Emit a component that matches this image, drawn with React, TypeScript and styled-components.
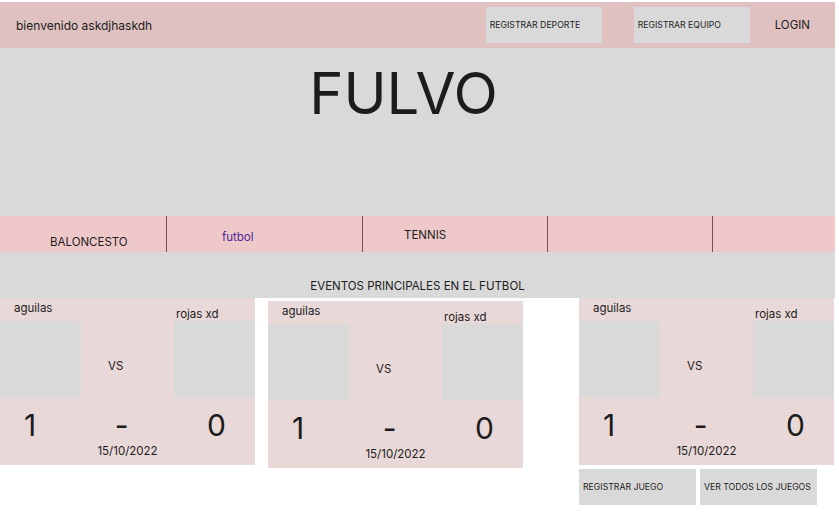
import styled, { createGlobalStyle } from "styled-components";

const GlobalStyle = createGlobalStyle`
  body {
    margin: 0;
    background: #ffffff;
    font-family: Inter, "Noto Sans", Arial, sans-serif;
    color: #1c1c1c;
  }
`;

const Page = styled.div`
  width: 835px;
  padding-top: 2px;
`;

const Header = styled.header`
  display: flex;
  align-items: center;
  height: 46px;
  padding-right: 25px;
  background-color: #dfc1c1;
`;

const Greeting = styled.span`
  flex: 1;
  padding-left: 16px;
  font-size: 12px;
`;

const GreyButton = styled.button<{ $gap?: number; $width?: number }>`
  display: flex;
  align-items: center;
  width: ${(p) => p.$width ?? 117}px;
  height: 36px;
  margin-left: ${(p) => p.$gap ?? 0}px;
  padding: 0 0 0 4px;
  border: none;
  background-color: #d9d9d9;
  color: #1c1c1c;
  font-family: Inter, "Noto Sans", Arial, sans-serif;
  font-size: 8.7px;
  text-align: left;
  cursor: pointer;
`;

const LoginLink = styled.span`
  margin-left: 25px;
  font-size: 11.5px;
`;

const Hero = styled.section`
  height: 168px;
  padding-right: 28px;
  background-color: #d9d9d9;
  text-align: center;
`;

const Title = styled.h1`
  margin: 0;
  padding-top: 12px;
  font-size: 58px;
  font-weight: 400;
  line-height: 66px;
`;

const SportNav = styled.nav`
  display: grid;
  grid-template-columns: 167px 196px 185px 165px 1fr;
  height: 36px;
  background-color: #efc9c9;
`;

const SportTab = styled.div<{ $left: number; $top: number; $active?: boolean; $last?: boolean }>`
  padding-left: ${(p) => p.$left}px;
  padding-top: ${(p) => p.$top}px;
  border-right: ${(p) => (p.$last ? "none" : "1px solid #735353")};
  font-size: 11.5px;
  line-height: 14px;
  color: ${(p) => (p.$active ? "#4b2696" : "#1c1c1c")};
`;

const EventsBand = styled.div`
  height: 46px;
  padding-top: 27px;
  box-sizing: border-box;
  background-color: #d9d9d9;
  font-size: 11.5px;
  line-height: 14px;
  text-align: center;
`;

const CardsRow = styled.div`
  display: flex;
  align-items: flex-start;
`;

const CardColumn = styled.div<{ $offsetX?: number; $offsetY?: number }>`
  display: flex;
  flex-direction: column;
  gap: 4px;
  margin-left: ${(p) => p.$offsetX ?? 0}px;
  margin-top: ${(p) => p.$offsetY ?? 0}px;
`;

const Card = styled.div`
  width: 255px;
  height: 167px;
  background-color: #e9d8d8;
  font-size: 11.5px;
  line-height: 14px;
`;

const NamesRow = styled.div`
  position: relative;
  display: flex;
  height: 23px;
`;

const TeamName = styled.span<{ $left: number; $top: number }>`
  position: absolute;
  left: ${(p) => p.$left}px;
  top: ${(p) => p.$top}px;
`;

const MatchRow = styled.div`
  display: grid;
  grid-template-columns: 81px 93px 81px;
  height: 76px;
`;

const LogoBox = styled.div`
  background-color: #d9d9d9;
`;

const Versus = styled.div`
  padding-left: 27px;
  padding-top: 38px;
`;

const ScoreRow = styled.div`
  display: flex;
  justify-content: space-between;
  padding: 11px 29px 0 24px;
  font-size: 30px;
  line-height: 34px;
`;

const MatchDate = styled.div`
  margin-top: 2px;
  text-align: center;
`;

const ActionRow = styled.div`
  display: flex;
`;

type Match = { home: string; away: string; homeScore: number; awayScore: number; date: string };

const match: Match = {
  home: "aguilas",
  away: "rojas xd",
  homeScore: 1,
  awayScore: 0,
  date: "15/10/2022",
};

function MatchCard({ m }: { m: Match }) {
  return (
    <Card>
      <NamesRow>
        <TeamName $left={14} $top={3}>{m.home}</TeamName>
        <TeamName $left={176} $top={9}>{m.away}</TeamName>
      </NamesRow>
      <MatchRow>
        <LogoBox />
        <Versus>VS</Versus>
        <LogoBox />
      </MatchRow>
      <ScoreRow>
        <span>{m.homeScore}</span>
        <span>-</span>
        <span>{m.awayScore}</span>
      </ScoreRow>
      <MatchDate>{m.date}</MatchDate>
    </Card>
  );
}

export default function App() {
  return (
    <>
      <GlobalStyle />
      <Page>
        <Header>
          <Greeting>bienvenido askdjhaskdh</Greeting>
          <GreyButton $width={116}>REGISTRAR DEPORTE</GreyButton>
          <GreyButton $width={116} $gap={32}>REGISTRAR EQUIPO</GreyButton>
          <LoginLink>LOGIN</LoginLink>
        </Header>
        <Hero>
          <Title>FULVO</Title>
        </Hero>
        <SportNav>
          <SportTab $left={50} $top={19}>BALONCESTO</SportTab>
          <SportTab $left={55} $top={14} $active>futbol</SportTab>
          <SportTab $left={41} $top={12}>TENNIS</SportTab>
          <SportTab $left={0} $top={0} />
          <SportTab $left={0} $top={0} $last />
        </SportNav>
        <EventsBand>EVENTOS PRINCIPALES EN EL FUTBOL</EventsBand>
        <CardsRow>
          <CardColumn>
            <MatchCard m={match} />
          </CardColumn>
          <CardColumn $offsetX={13} $offsetY={3}>
            <MatchCard m={match} />
          </CardColumn>
          <CardColumn $offsetX={56}>
            <MatchCard m={match} />
            <ActionRow>
              <GreyButton>REGISTRAR JUEGO</GreyButton>
              <GreyButton $gap={4}>VER TODOS LOS JUEGOS</GreyButton>
            </ActionRow>
          </CardColumn>
        </CardsRow>
      </Page>
    </>
  );
}
